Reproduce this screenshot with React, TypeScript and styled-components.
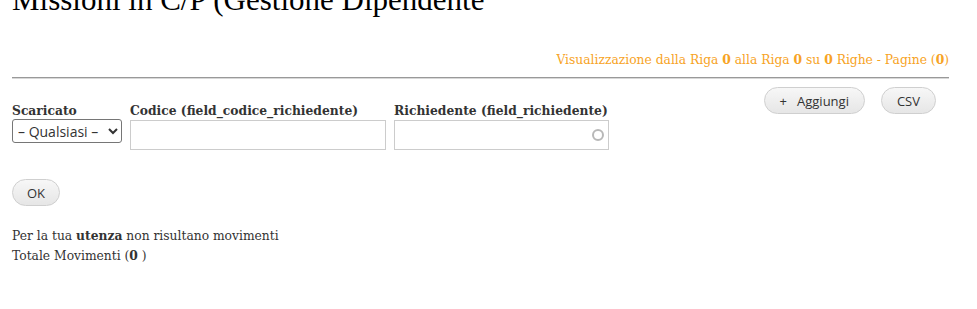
import React from 'react';
import styled, { createGlobalStyle } from 'styled-components';

const GlobalStyle = createGlobalStyle`
    html, body {
        margin: 0;
        padding: 0;
        background: #fff;
    }
    body {
        font-family: 'DejaVu Serif', serif;
        color: #222;
    }
`;

const filters = [
    { label: 'Codice (field_codice_richiedente)', width: 256 },
    { label: 'Richiedente (field_richiedente)', width: 215, autocomplete: true },
];

const App: React.FC = () => {
    return (
        <Page>
            <GlobalStyle />
            <Title>Missioni in C/P (Gestione Dipendente</Title>
            <Summary>
                Visualizzazione dalla Riga <b>0</b> alla Riga <b>0</b> su <b>0</b> Righe - Pagine (<b>0</b>)
            </Summary>
            <Rule />
            <Toolbar>
                <ActionBar>
                    <PillButton>
                        <Plus>+</Plus>Aggiungi
                    </PillButton>
                    <PillButton>CSV</PillButton>
                </ActionBar>
                <FilterRow>
                    <Field>
                        <Label>Scaricato</Label>
                        <Select defaultValue="All">
                            <option value="All">– Qualsiasi –</option>
                        </Select>
                    </Field>
                    {filters.map((f) => (
                        <Field key={f.label}>
                            <Label>{f.label}</Label>
                            <InputWrap>
                                <TextInput style={{ width: f.width }} />
                                {f.autocomplete && <Throbber />}
                            </InputWrap>
                        </Field>
                    ))}
                </FilterRow>
            </Toolbar>
            <SubmitRow>
                <PillButton $compact>OK</PillButton>
            </SubmitRow>
            <Message>
                Per la tua <b>utenza</b> non risultano movimenti
                <br />
                Totale Movimenti (<b>0</b> )
            </Message>
        </Page>
    );
};

const Page = styled.div`
    padding: 0 28px 0 12px;
    width: 977px;
    height: 309px;
    box-sizing: border-box;
    overflow: hidden;
`;

const Title = styled.h1`
    margin: -18px 0 0;
    font-family: 'Liberation Serif', serif;
    font-weight: normal;
    font-size: 31px;
    line-height: 36px;
    color: #000;
`;

const Summary = styled.div`
    margin-top: 32px;
    text-align: right;
    font-size: 12.3px;
    line-height: 20px;
    color: #f7a325;
`;

const Rule = styled.div`
    margin-top: 7px;
    height: 0;
    border-top: 1px solid #999;
    border-bottom: 1px solid #d8d8d8;
`;

const Toolbar = styled.div`
    display: flex;
    flex-direction: column;
    margin-top: 8px;
`;

const ActionBar = styled.div`
    display: flex;
    justify-content: flex-end;
    gap: 16px;
    padding-right: 13px;
    height: 27px;
`;

const FilterRow = styled.div`
    display: flex;
    align-items: flex-start;
    gap: 8px;
    margin-top: -13px;
`;

const Field = styled.div`
    display: flex;
    flex-direction: column;
    align-items: flex-start;
`;

const Label = styled.label`
    font-weight: bold;
    font-size: 12.3px;
    line-height: 19px;
    color: #333;
`;

const Select = styled.select`
    height: 24px;
    width: 110px;
    margin-top: -1px;
    padding: 0 1px;
    border: 1px solid #767676;
    border-radius: 3px;
    background: #fff;
    font-family: 'Open Sans', sans-serif;
    font-size: 14px;
    color: #333;
`;

const InputWrap = styled.div`
    position: relative;
`;

const TextInput = styled.input`
    display: block;
    box-sizing: border-box;
    height: 30px;
    border: 1px solid #ccc;
    border-radius: 0;
    padding: 4px 6px;
    font-family: 'Open Sans', sans-serif;
    font-size: 13px;
    outline: none;
`;

const Throbber = styled.span`
    position: absolute;
    right: 5px;
    top: 9px;
    width: 8px;
    height: 8px;
    border: 2px solid #b8b8b8;
    border-radius: 50%;
`;

const PillButton = styled.button<{ $compact?: boolean }>`
    height: 27px;
    padding: 0 ${(p) => (p.$compact ? '14px' : '15px')};
    border: 1px solid #cfcfcf;
    border-radius: 14px;
    background: linear-gradient(#f7f7f7, #e6e6e6);
    font-family: 'Open Sans', sans-serif;
    font-size: 13px;
    color: #333;
    cursor: pointer;
`;

const Plus = styled.span`
    margin-right: 10px;
`;

const SubmitRow = styled.div`
    margin-top: 29px;
`;

const Message = styled.div`
    margin-top: 20px;
    font-size: 12.3px;
    line-height: 20px;
    color: #333;
`;

export default App;
